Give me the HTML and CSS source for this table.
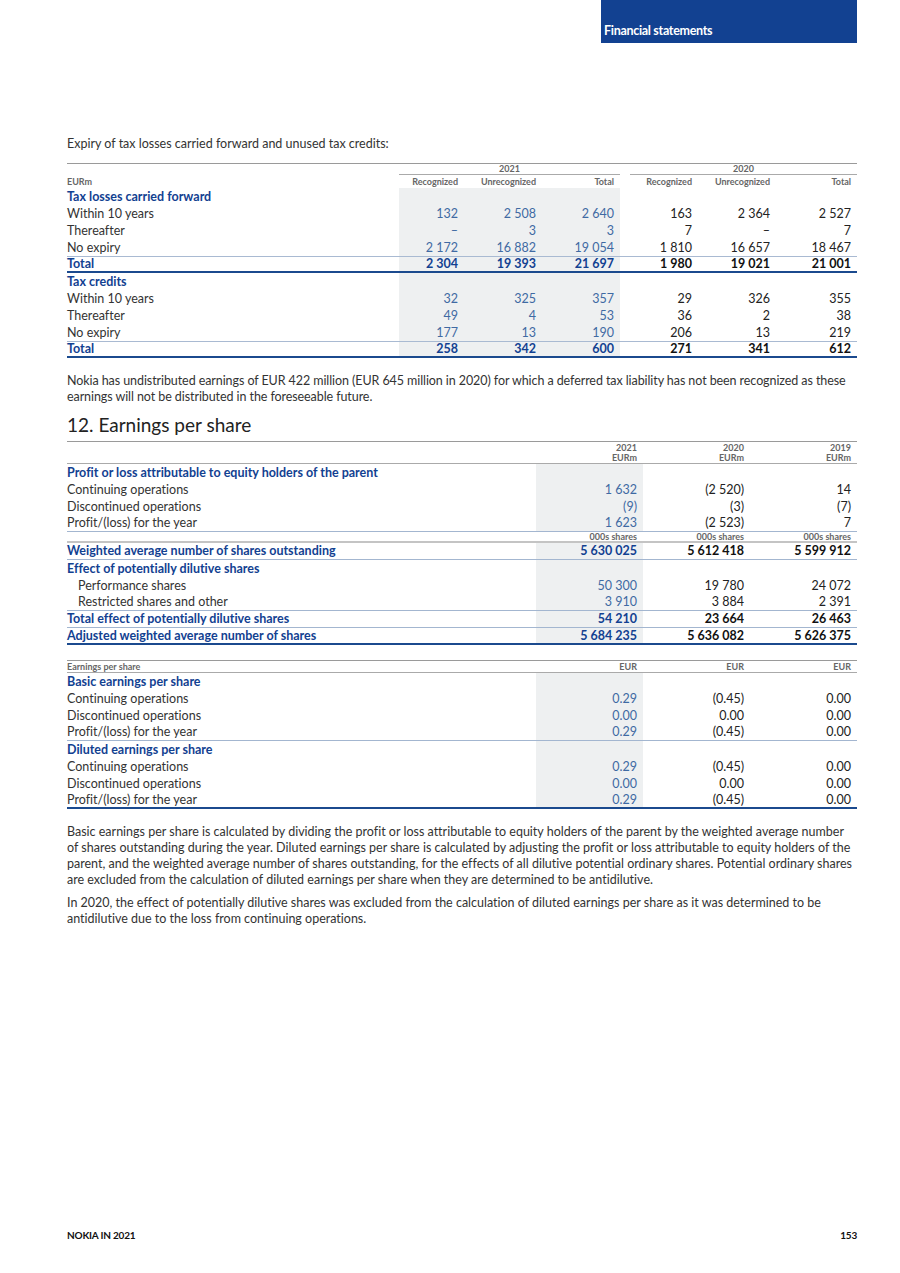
FILE: index.html
```html
<!DOCTYPE html>
<html lang="en">

<head>
    <meta charset="UTF-8">
    <meta name="viewport" content="width=device-width, initial-scale=1.0">
    <title>Financial statements - Nokia in 2021</title>
    <link rel="stylesheet" href="styles.css">
</head>

<body>
    <div class="sheet">
        <header class="top">
            <div class="tab">Financial statements</div>
        </header>

        <main class="page">
            <p class="intro">Expiry of tax losses carried forward and unused tax credits:</p>

            <table class="fin expiry">
                <colgroup>
                    <col class="w-label">
                    <col class="w-65">
                    <col class="w-78">
                    <col class="w-78">
                    <col class="w-gap">
                    <col class="w-68">
                    <col class="w-78">
                    <col class="w-81">
                </colgroup>
                <thead>
                    <tr class="group">
                        <th></th>
                        <th colspan="3" class="yr">2021</th>
                        <th></th>
                        <th colspan="3" class="yr">2020</th>
                    </tr>
                    <tr class="cols">
                        <th class="lbl">EURm</th>
                        <th>Recognized</th>
                        <th>Unrecognized</th>
                        <th>Total</th>
                        <th></th>
                        <th>Recognized</th>
                        <th>Unrecognized</th>
                        <th>Total</th>
                    </tr>
                </thead>
                <tbody>
                    <tr class="sec">
                        <td>Tax losses carried forward</td>
                        <td class="cur"></td><td class="cur"></td><td class="cur"></td>
                        <td></td><td></td><td></td><td></td>
                    </tr>
                    <tr>
                        <td>Within 10 years</td>
                        <td class="cur">132</td><td class="cur">2 508</td><td class="cur">2 640</td>
                        <td></td><td>163</td><td>2 364</td><td>2 527</td>
                    </tr>
                    <tr>
                        <td>Thereafter</td>
                        <td class="cur">–</td><td class="cur">3</td><td class="cur">3</td>
                        <td></td><td>7</td><td>–</td><td>7</td>
                    </tr>
                    <tr>
                        <td>No expiry</td>
                        <td class="cur">2 172</td><td class="cur">16 882</td><td class="cur">19 054</td>
                        <td></td><td>1 810</td><td>16 657</td><td>18 467</td>
                    </tr>
                    <tr class="total">
                        <td>Total</td>
                        <td class="cur">2 304</td><td class="cur">19 393</td><td class="cur">21 697</td>
                        <td></td><td>1 980</td><td>19 021</td><td>21 001</td>
                    </tr>
                    <tr class="sec">
                        <td>Tax credits</td>
                        <td class="cur"></td><td class="cur"></td><td class="cur"></td>
                        <td></td><td></td><td></td><td></td>
                    </tr>
                    <tr>
                        <td>Within 10 years</td>
                        <td class="cur">32</td><td class="cur">325</td><td class="cur">357</td>
                        <td></td><td>29</td><td>326</td><td>355</td>
                    </tr>
                    <tr>
                        <td>Thereafter</td>
                        <td class="cur">49</td><td class="cur">4</td><td class="cur">53</td>
                        <td></td><td>36</td><td>2</td><td>38</td>
                    </tr>
                    <tr>
                        <td>No expiry</td>
                        <td class="cur">177</td><td class="cur">13</td><td class="cur">190</td>
                        <td></td><td>206</td><td>13</td><td>219</td>
                    </tr>
                    <tr class="total">
                        <td>Total</td>
                        <td class="cur">258</td><td class="cur">342</td><td class="cur">600</td>
                        <td></td><td>271</td><td>341</td><td>612</td>
                    </tr>
                </tbody>
            </table>

            <p class="text after-table">Nokia has undistributed earnings of EUR 422 million (EUR 645 million in 2020) for which a deferred tax liability has not been recognized as these earnings will not be distributed in the foreseeable future.</p>

            <h2 class="note-title">12. Earnings per share</h2>

            <table class="fin eps">
                <colgroup>
                    <col class="w-eps-label">
                    <col class="w-107">
                    <col class="w-107">
                    <col class="w-107">
                </colgroup>
                <thead>
                    <tr class="cols two-line">
                        <th></th>
                        <th>2021<br>EURm</th>
                        <th>2020<br>EURm</th>
                        <th>2019<br>EURm</th>
                    </tr>
                </thead>
                <tbody>
                    <tr class="sec">
                        <td>Profit or loss attributable to equity holders of the parent</td>
                        <td class="cur"></td><td></td><td></td>
                    </tr>
                    <tr>
                        <td>Continuing operations</td>
                        <td class="cur">1 632</td><td>(2 520)</td><td>14</td>
                    </tr>
                    <tr>
                        <td>Discontinued operations</td>
                        <td class="cur">(9)</td><td>(3)</td><td>(7)</td>
                    </tr>
                    <tr class="sub-end">
                        <td>Profit/(loss) for the year</td>
                        <td class="cur">1 623</td><td>(2 523)</td><td>7</td>
                    </tr>
                    <tr class="unit">
                        <td></td>
                        <td>000s shares</td><td>000s shares</td><td>000s shares</td>
                    </tr>
                    <tr class="strong sub-end">
                        <td>Weighted average number of shares outstanding</td>
                        <td class="cur">5 630 025</td><td>5 612 418</td><td>5 599 912</td>
                    </tr>
                    <tr class="sec">
                        <td>Effect of potentially dilutive shares</td>
                        <td class="cur"></td><td></td><td></td>
                    </tr>
                    <tr class="indent">
                        <td>Performance shares</td>
                        <td class="cur">50 300</td><td>19 780</td><td>24 072</td>
                    </tr>
                    <tr class="indent sub-end">
                        <td>Restricted shares and other</td>
                        <td class="cur">3 910</td><td>3 884</td><td>2 391</td>
                    </tr>
                    <tr class="strong sub-end">
                        <td>Total effect of potentially dilutive shares</td>
                        <td class="cur">54 210</td><td>23 664</td><td>26 463</td>
                    </tr>
                    <tr class="strong last">
                        <td>Adjusted weighted average number of shares</td>
                        <td class="cur">5 684 235</td><td>5 636 082</td><td>5 626 375</td>
                    </tr>
                </tbody>
            </table>

            <table class="fin eps per-share">
                <colgroup>
                    <col class="w-eps-label">
                    <col class="w-107">
                    <col class="w-107">
                    <col class="w-107">
                </colgroup>
                <thead>
                    <tr class="cols">
                        <th class="lbl">Earnings per share</th>
                        <th>EUR</th>
                        <th>EUR</th>
                        <th>EUR</th>
                    </tr>
                </thead>
                <tbody>
                    <tr class="sec">
                        <td>Basic earnings per share</td>
                        <td class="cur"></td><td></td><td></td>
                    </tr>
                    <tr>
                        <td>Continuing operations</td>
                        <td class="cur">0.29</td><td>(0.45)</td><td>0.00</td>
                    </tr>
                    <tr>
                        <td>Discontinued operations</td>
                        <td class="cur">0.00</td><td>0.00</td><td>0.00</td>
                    </tr>
                    <tr class="sub-end">
                        <td>Profit/(loss) for the year</td>
                        <td class="cur">0.29</td><td>(0.45)</td><td>0.00</td>
                    </tr>
                    <tr class="sec">
                        <td>Diluted earnings per share</td>
                        <td class="cur"></td><td></td><td></td>
                    </tr>
                    <tr>
                        <td>Continuing operations</td>
                        <td class="cur">0.29</td><td>(0.45)</td><td>0.00</td>
                    </tr>
                    <tr>
                        <td>Discontinued operations</td>
                        <td class="cur">0.00</td><td>0.00</td><td>0.00</td>
                    </tr>
                    <tr class="plain-last">
                        <td>Profit/(loss) for the year</td>
                        <td class="cur">0.29</td><td>(0.45)</td><td>0.00</td>
                    </tr>
                </tbody>
            </table>

            <p class="text after-eps">Basic earnings per share is calculated by dividing the profit or loss attributable to equity holders of the parent by the weighted average number of shares outstanding during the year. Diluted earnings per share is calculated by adjusting the profit or loss attributable to equity holders of the parent, and the weighted average number of shares outstanding, for the effects of all dilutive potential ordinary shares. Potential ordinary shares are excluded from the calculation of diluted earnings per share when they are determined to be antidilutive.</p>
            <p class="text">In 2020, the effect of potentially dilutive shares was excluded from the calculation of diluted earnings per share as it was determined to be antidilutive due to the loss from continuing operations.</p>
        </main>

        <footer class="foot">
            <span>NOKIA IN 2021</span>
            <span>153</span>
        </footer>
    </div>
</body>

</html>
```

FILE: styles.css
```css
body {
    margin: 0;
    background: #fff;
    color: #333;
    font-family: Lato, "Open Sans", sans-serif;
    font-variant-ligatures: none;
}

.sheet {
    width: 900px;
    min-height: 1273px;
    display: flex;
    flex-direction: column;
}

.top {
    display: flex;
    justify-content: flex-end;
    padding-right: 43px;
}

.tab {
    width: 256px;
    height: 43px;
    box-sizing: border-box;
    padding: 23px 0 0 3px;
    background: #124191;
    color: #fff;
    font-size: 12.5px;
    font-weight: 700;
    letter-spacing: -0.3px;
}

.page {
    padding: 0 43px 0 67px;
}

p {
    margin: 0;
}

.intro {
    margin-top: 93px;
    font-size: 12.5px;
    line-height: 16px;
}

.text {
    font-size: 12.5px;
    line-height: 16px;
    margin-bottom: 7px;
}

.after-table {
    margin-top: 15px;
    margin-bottom: 4px;
    letter-spacing: -0.08px;
}

.after-eps {
    margin-top: 15px;
}

.note-title {
    margin: 0;
    font-size: 19px;
    font-weight: 400;
    line-height: 32px;
    color: #222;
}

/* tables */
table.fin {
    width: 790px;
    table-layout: fixed;
    border-collapse: separate;
    border-spacing: 0;
    border-top: 1px solid #9a9a9a;
    font-size: 12.5px;
}

table.expiry {
    margin-top: 11px;
}

.w-label { width: 332px; }
.w-65 { width: 65px; }
.w-68 { width: 68px; }
.w-78 { width: 78px; }
.w-81 { width: 81px; }
.w-gap { width: 10px; }
.w-eps-label { width: 469px; }
.w-107 { width: 107px; }

.fin th,
.fin td {
    padding: 0 6px 0 0;
    text-align: right;
    white-space: nowrap;
}

.fin th:first-child,
.fin td:first-child {
    text-align: left;
    padding: 0;
}

.fin thead th {
    font-size: 9px;
    font-weight: 700;
    color: #666;
    line-height: 12px;
}

.fin .group th {
    line-height: 10px;
}

.fin .group th.yr {
    text-align: center;
    padding: 0;
    border-bottom: 1px solid #aaa;
}

.fin .cols th {
    line-height: 13px;
}

.eps .cols.two-line th {
    line-height: 10px;
    padding-top: 1px;
    padding-bottom: 0;
    border-bottom: 1px solid #aaa;
}

.per-share {
    margin-top: 15px;
}

.per-share .cols th {
    line-height: 11px;
    border-bottom: 1px solid #aaa;
}

.fin tbody td {
    line-height: 17px;
    font-weight: 400;
    color: #222;
}

.fin tbody td:first-child {
    color: #333;
}

.fin td.cur {
    background: #eef0f1;
    color: #3f6aa3;
}

.fin tr.sec td:first-child {
    font-weight: 700;
    color: #124191;
}

.fin tr.total td {
    line-height: 14px;
    border-top: 1px solid #a9bad2;
    border-bottom: 2px solid #1b4a8e;
    font-weight: 700;
    color: #111;
}

.fin tr.total td:first-child,
.fin tr.total td.cur {
    color: #124191;
}

.fin tr.sub-end td {
    line-height: 16px;
    border-bottom: 1px solid #a3b6d0;
}

.fin tr.unit td {
    font-size: 9px;
    font-weight: 700;
    color: #666;
    line-height: 9px;
    border-bottom: 2px solid #c4c4c4;
}

.fin tr.strong td {
    font-weight: 700;
    color: #111;
}

.fin tr.strong td:first-child,
.fin tr.strong td.cur {
    color: #124191;
}

.fin tr.last td {
    line-height: 15px;
    border-bottom: 2px solid #1b4a8e;
}

.fin tr.plain-last td {
    line-height: 15px;
    border-bottom: 2px solid #1b4a8e;
}

.fin tr.indent td:first-child {
    padding-left: 11px;
}

.foot {
    margin-top: auto;
    display: flex;
    justify-content: space-between;
    padding: 0 43px 32px 67px;
    font-size: 10px;
    font-weight: 700;
    color: #111;
    letter-spacing: -0.2px;
}
```
